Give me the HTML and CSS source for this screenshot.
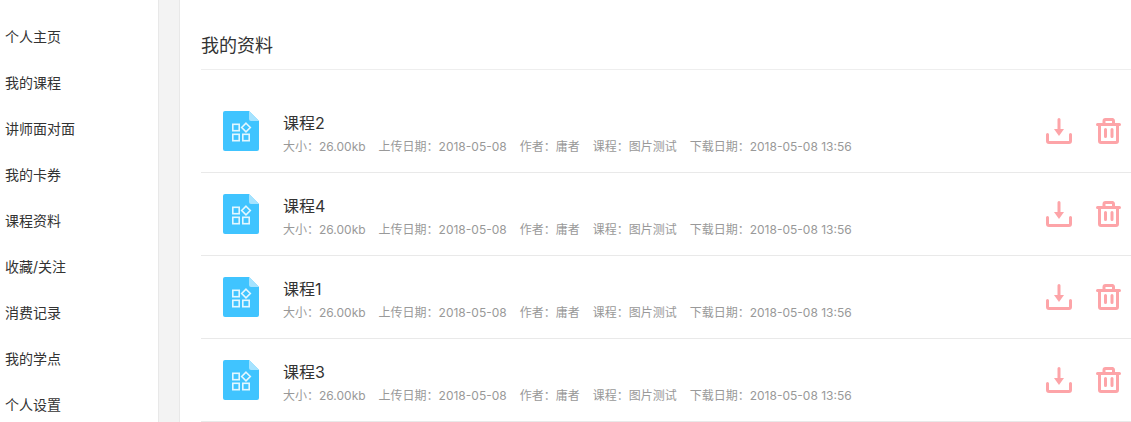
FILE: index.html
```html
<!DOCTYPE html>
<html lang="zh-CN">
<head>
    <meta charset="UTF-8">
    <title>我的资料</title>
    <link rel="stylesheet" href="styles.css">
</head>
<body>

    <svg class="svg-defs" width="0" height="0">
        <symbol id="icon-file" viewBox="0 0 36 40">
            <path d="M2 0H26L36 10V38a2 2 0 0 1-2 2H2a2 2 0 0 1-2-2V2a2 2 0 0 1 2-2z" fill="#40c4ff"/>
            <path d="M26 0L36 10H28a2 2 0 0 1-2-2z" fill="#a5e3ff"/>
            <g fill="none" stroke="#e3f7ff" stroke-width="1.6">
                <rect x="9.800" y="13.300" width="6.400" height="6.400"/>
                <rect x="9.800" y="23.300" width="6.400" height="6.400"/>
                <rect x="19.800" y="23.300" width="6.400" height="6.400"/>
                <path d="M23 12.200l4.300 4.300-4.300 4.300-4.300-4.300z"/>
            </g>
        </symbol>
        <symbol id="icon-download" viewBox="0 0 26 26">
            <path d="M1.500 16.500v6.500a1.500 1.500 0 0 0 1.500 1.500h20a1.500 1.500 0 0 0 1.500-1.500v-6.500M13 1.500v11" fill="none" stroke="#fda4a8" stroke-width="3" stroke-linecap="round"/>
            <path d="M8 11h10l-5 7z" fill="#fda4a8"/>
        </symbol>
        <symbol id="icon-trash" viewBox="0 0 26 26">
            <path d="M1.500 6.500h22M8 6V3a1.500 1.500 0 0 1 1.500-1.500h6A1.500 1.500 0 0 1 17.500 3v3M3.500 7v16a1.500 1.500 0 0 0 1.500 1.500h15a1.500 1.500 0 0 0 1.500-1.500V7M9.500 11.500v7M16 11.500v7" fill="none" stroke="#fda4a8" stroke-width="3" stroke-linecap="round"/>
        </symbol>
    </svg>

    <div class="page">
        <aside class="sidebar">
            <a class="side-link">个人主页</a>
            <a class="side-link">我的课程</a>
            <a class="side-link">讲师面对面</a>
            <a class="side-link">我的卡券</a>
            <a class="side-link">课程资料</a>
            <a class="side-link">收藏/关注</a>
            <a class="side-link">消费记录</a>
            <a class="side-link">我的学点</a>
            <a class="side-link">个人设置</a>
        </aside>

        <main class="content">
            <h2 class="content-title">我的资料</h2>

            <ul class="file-list">
                <li class="file-row">
                    <svg class="file-icon"><use href="#icon-file"/></svg>
                    <div class="file-info">
                        <p class="file-name">课程2</p>
                        <p class="file-meta"><span>大小：26.00kb</span><span>上传日期：2018-05-08</span><span>作者：庸者</span><span>课程：图片测试</span><span>下载日期：2018-05-08 13:56</span></p>
                    </div>
                    <svg class="action-icon"><use href="#icon-download"/></svg>
                    <svg class="action-icon"><use href="#icon-trash"/></svg>
                </li>
                <li class="file-row">
                    <svg class="file-icon"><use href="#icon-file"/></svg>
                    <div class="file-info">
                        <p class="file-name">课程4</p>
                        <p class="file-meta"><span>大小：26.00kb</span><span>上传日期：2018-05-08</span><span>作者：庸者</span><span>课程：图片测试</span><span>下载日期：2018-05-08 13:56</span></p>
                    </div>
                    <svg class="action-icon"><use href="#icon-download"/></svg>
                    <svg class="action-icon"><use href="#icon-trash"/></svg>
                </li>
                <li class="file-row">
                    <svg class="file-icon"><use href="#icon-file"/></svg>
                    <div class="file-info">
                        <p class="file-name">课程1</p>
                        <p class="file-meta"><span>大小：26.00kb</span><span>上传日期：2018-05-08</span><span>作者：庸者</span><span>课程：图片测试</span><span>下载日期：2018-05-08 13:56</span></p>
                    </div>
                    <svg class="action-icon"><use href="#icon-download"/></svg>
                    <svg class="action-icon"><use href="#icon-trash"/></svg>
                </li>
                <li class="file-row">
                    <svg class="file-icon"><use href="#icon-file"/></svg>
                    <div class="file-info">
                        <p class="file-name">课程3</p>
                        <p class="file-meta"><span>大小：26.00kb</span><span>上传日期：2018-05-08</span><span>作者：庸者</span><span>课程：图片测试</span><span>下载日期：2018-05-08 13:56</span></p>
                    </div>
                    <svg class="action-icon"><use href="#icon-download"/></svg>
                    <svg class="action-icon"><use href="#icon-trash"/></svg>
                </li>
            </ul>
        </main>
    </div>

</body>
</html>
```

FILE: styles.css
```css
* {
    margin: 0;
    padding: 0;
    box-sizing: border-box;
}

html, body {
    height: 100%;
    overflow: hidden;
}

body {
    font-family: Inter, "Noto Sans CJK SC", sans-serif;
    background-color: #fff;
    color: #333;
}

.svg-defs {
    display: block;
    height: 0;
}

.page {
    display: flex;
    height: 422px;
    background-color: #f3f3f3;
}

.sidebar {
    width: 159px;
    flex-shrink: 0;
    padding-top: 14px;
    background-color: #fff;
    border-right: 1px solid #e8e8e8;
}

.side-link {
    display: block;
    height: 46px;
    line-height: 46px;
    padding-left: 5px;
    font-size: 14px;
    color: #333;
}

.content {
    width: 952px;
    margin-left: 20px;
    flex-shrink: 0;
    padding-left: 21px;
    background-color: #fff;
    border-left: 1px solid #e8e8e8;
}

.content-title {
    height: 70px;
    padding-top: 33px;
    line-height: 26px;
    font-size: 18px;
    font-weight: 400;
    color: #333;
    border-bottom: 1px solid #eee;
}

.file-list {
    list-style: none;
    padding-top: 20px;
}

.file-row {
    display: flex;
    align-items: center;
    height: 83px;
    padding: 0 9px 0 22px;
    border-bottom: 1px solid #e9e9e9;
}

.file-icon {
    width: 36px;
    height: 40px;
    flex-shrink: 0;
    margin-right: 24px;
}

.file-info {
    flex: 1;
    min-width: 0;
    padding-top: 5px;
}

.file-name {
    font-size: 16px;
    line-height: 22px;
    color: #333;
}

.file-meta {
    display: flex;
    gap: 13px;
    margin-top: 4px;
    font-family: Inter, "Noto Sans CJK JP", sans-serif;
    font-size: 12px;
    line-height: 18px;
    color: #999;
}

.action-icon {
    width: 26px;
    height: 26px;
    flex-shrink: 0;
    margin-left: 24px;
}
```
